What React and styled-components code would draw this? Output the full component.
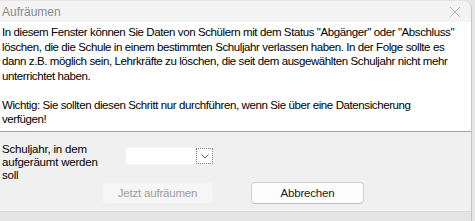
import React from 'react';
import styled, { createGlobalStyle } from 'styled-components';

const GlobalStyle = createGlobalStyle`
  html, body {
    margin: 0;
    padding: 0;
    background: #e6e6e6;
  }
  body {
    font-family: "Liberation Sans", Arial, sans-serif;
    font-size: 11.5px;
    color: #000;
  }
`;

const Window = styled.div`
  width: 471px;
  height: 220px;
  margin-top: 1px;
  background: #f0f0f0;
  border-right: 1px solid #c4c4c4;
  border-top-right-radius: 8px;
  display: flex;
  flex-direction: column;
  overflow: hidden;
`;

const TitleBar = styled.div`
  height: 21px;
  flex: none;
  background: #f3f3f3;
  display: flex;
  align-items: center;
  justify-content: space-between;
  padding: 0 10px 0 2px;
`;

const Title = styled.span`
  color: #8c8c8c;
  font-size: 12px;
`;

const CloseButton = styled.span`
  display: flex;
  width: 12px;
  height: 12px;
`;

const InfoPanel = styled.div`
  height: 110px;
  flex: none;
  box-sizing: border-box;
  background: #fff;
  border-bottom: 1px solid #a0a0a0;
  padding: 3px 2px 0 2px;
  line-height: 14.5px;
  letter-spacing: -0.4px;
  white-space: nowrap;
  overflow: hidden;
`;

const Paragraph = styled.p`
  margin: 0 0 14.5px 0;
`;

const FormArea = styled.div`
  flex: 1;
  display: flex;
  flex-direction: column;
  padding: 11px 0 0 2px;
`;

const FieldRow = styled.div`
  display: flex;
  align-items: flex-start;
  height: 39px;
`;

const FieldLabel = styled.label`
  width: 123px;
  line-height: 13px;
  letter-spacing: -0.2px;
  white-space: nowrap;
`;

const Combo = styled.div`
  margin-top: 4px;
  width: 89px;
  height: 18px;
  display: flex;
  background: #fff;
  border: 1px solid #f4f4f4;
  box-sizing: border-box;
`;

const ComboField = styled.div`
  flex: 1;
`;

const ComboToggle = styled.div`
  width: 17px;
  height: 16px;
  border: 1px dotted #7a7a7a;
  box-sizing: border-box;
  display: flex;
  align-items: center;
  justify-content: center;
`;

const ButtonRow = styled.div`
  display: flex;
  gap: 38px;
  padding: 0 0 0 100px;
`;

const Button = styled.button`
  width: ${(p) => (p.disabled ? '111px' : '113px')};
  height: 22px;
  border-radius: 4px;
  font-family: inherit;
  font-size: 11.5px;
  letter-spacing: -0.2px;
  padding: 0;
  border: 1px solid ${(p) => (p.disabled ? '#f2f2f2' : '#d0d0d0')};
  border-bottom-color: ${(p) => (p.disabled ? '#f2f2f2' : '#bdbdbd')};
  background: ${(p) => (p.disabled ? '#f6f6f6' : '#fdfdfd')};
  color: ${(p) => (p.disabled ? '#9d9d9d' : '#1a1a1a')};
`;

const BottomStrip = styled.div`
  height: 10px;
  flex: none;
  box-sizing: border-box;
  background: #e4e4e4;
  border-top: 1px solid #dadada;
`;

const App = () => (
  <>
    <GlobalStyle />
    <Window>
      <TitleBar>
        <Title>Aufräumen</Title>
        <CloseButton>
          <svg width="12" height="12" viewBox="0 0 12 12">
            <path d="M1 1 L11 11 M11 1 L1 11" stroke="#b4b4b4" strokeWidth="1" fill="none" />
          </svg>
        </CloseButton>
      </TitleBar>
      <InfoPanel>
        <Paragraph>
          In diesem Fenster können Sie Daten von Schülern mit dem Status "Abgänger" oder "Abschluss"
          <br />
          löschen, die die Schule in einem bestimmten Schuljahr verlassen haben. In der Folge sollte es
          <br />
          dann z.B. möglich sein, Lehrkräfte zu löschen, die seit dem ausgewählten Schuljahr nicht mehr
          <br />
          unterrichtet haben.
        </Paragraph>
        <Paragraph>
          Wichtig: Sie sollten diesen Schritt nur durchführen, wenn Sie über eine Datensicherung
          <br />
          verfügen!
        </Paragraph>
      </InfoPanel>
      <FormArea>
        <FieldRow>
          <FieldLabel htmlFor="schuljahr">
            Schuljahr, in dem
            <br />
            aufgeräumt werden
            <br />
            soll
          </FieldLabel>
          <Combo id="schuljahr">
            <ComboField />
            <ComboToggle>
              <svg width="8" height="5" viewBox="0 0 8 5">
                <path d="M0.5 0.5 L4 4 L7.5 0.5" stroke="#606060" strokeWidth="1" fill="none" />
              </svg>
            </ComboToggle>
          </Combo>
        </FieldRow>
        <ButtonRow>
          <Button disabled>Jetzt aufräumen</Button>
          <Button>Abbrechen</Button>
        </ButtonRow>
      </FormArea>
      <BottomStrip />
    </Window>
  </>
);

export default App;
